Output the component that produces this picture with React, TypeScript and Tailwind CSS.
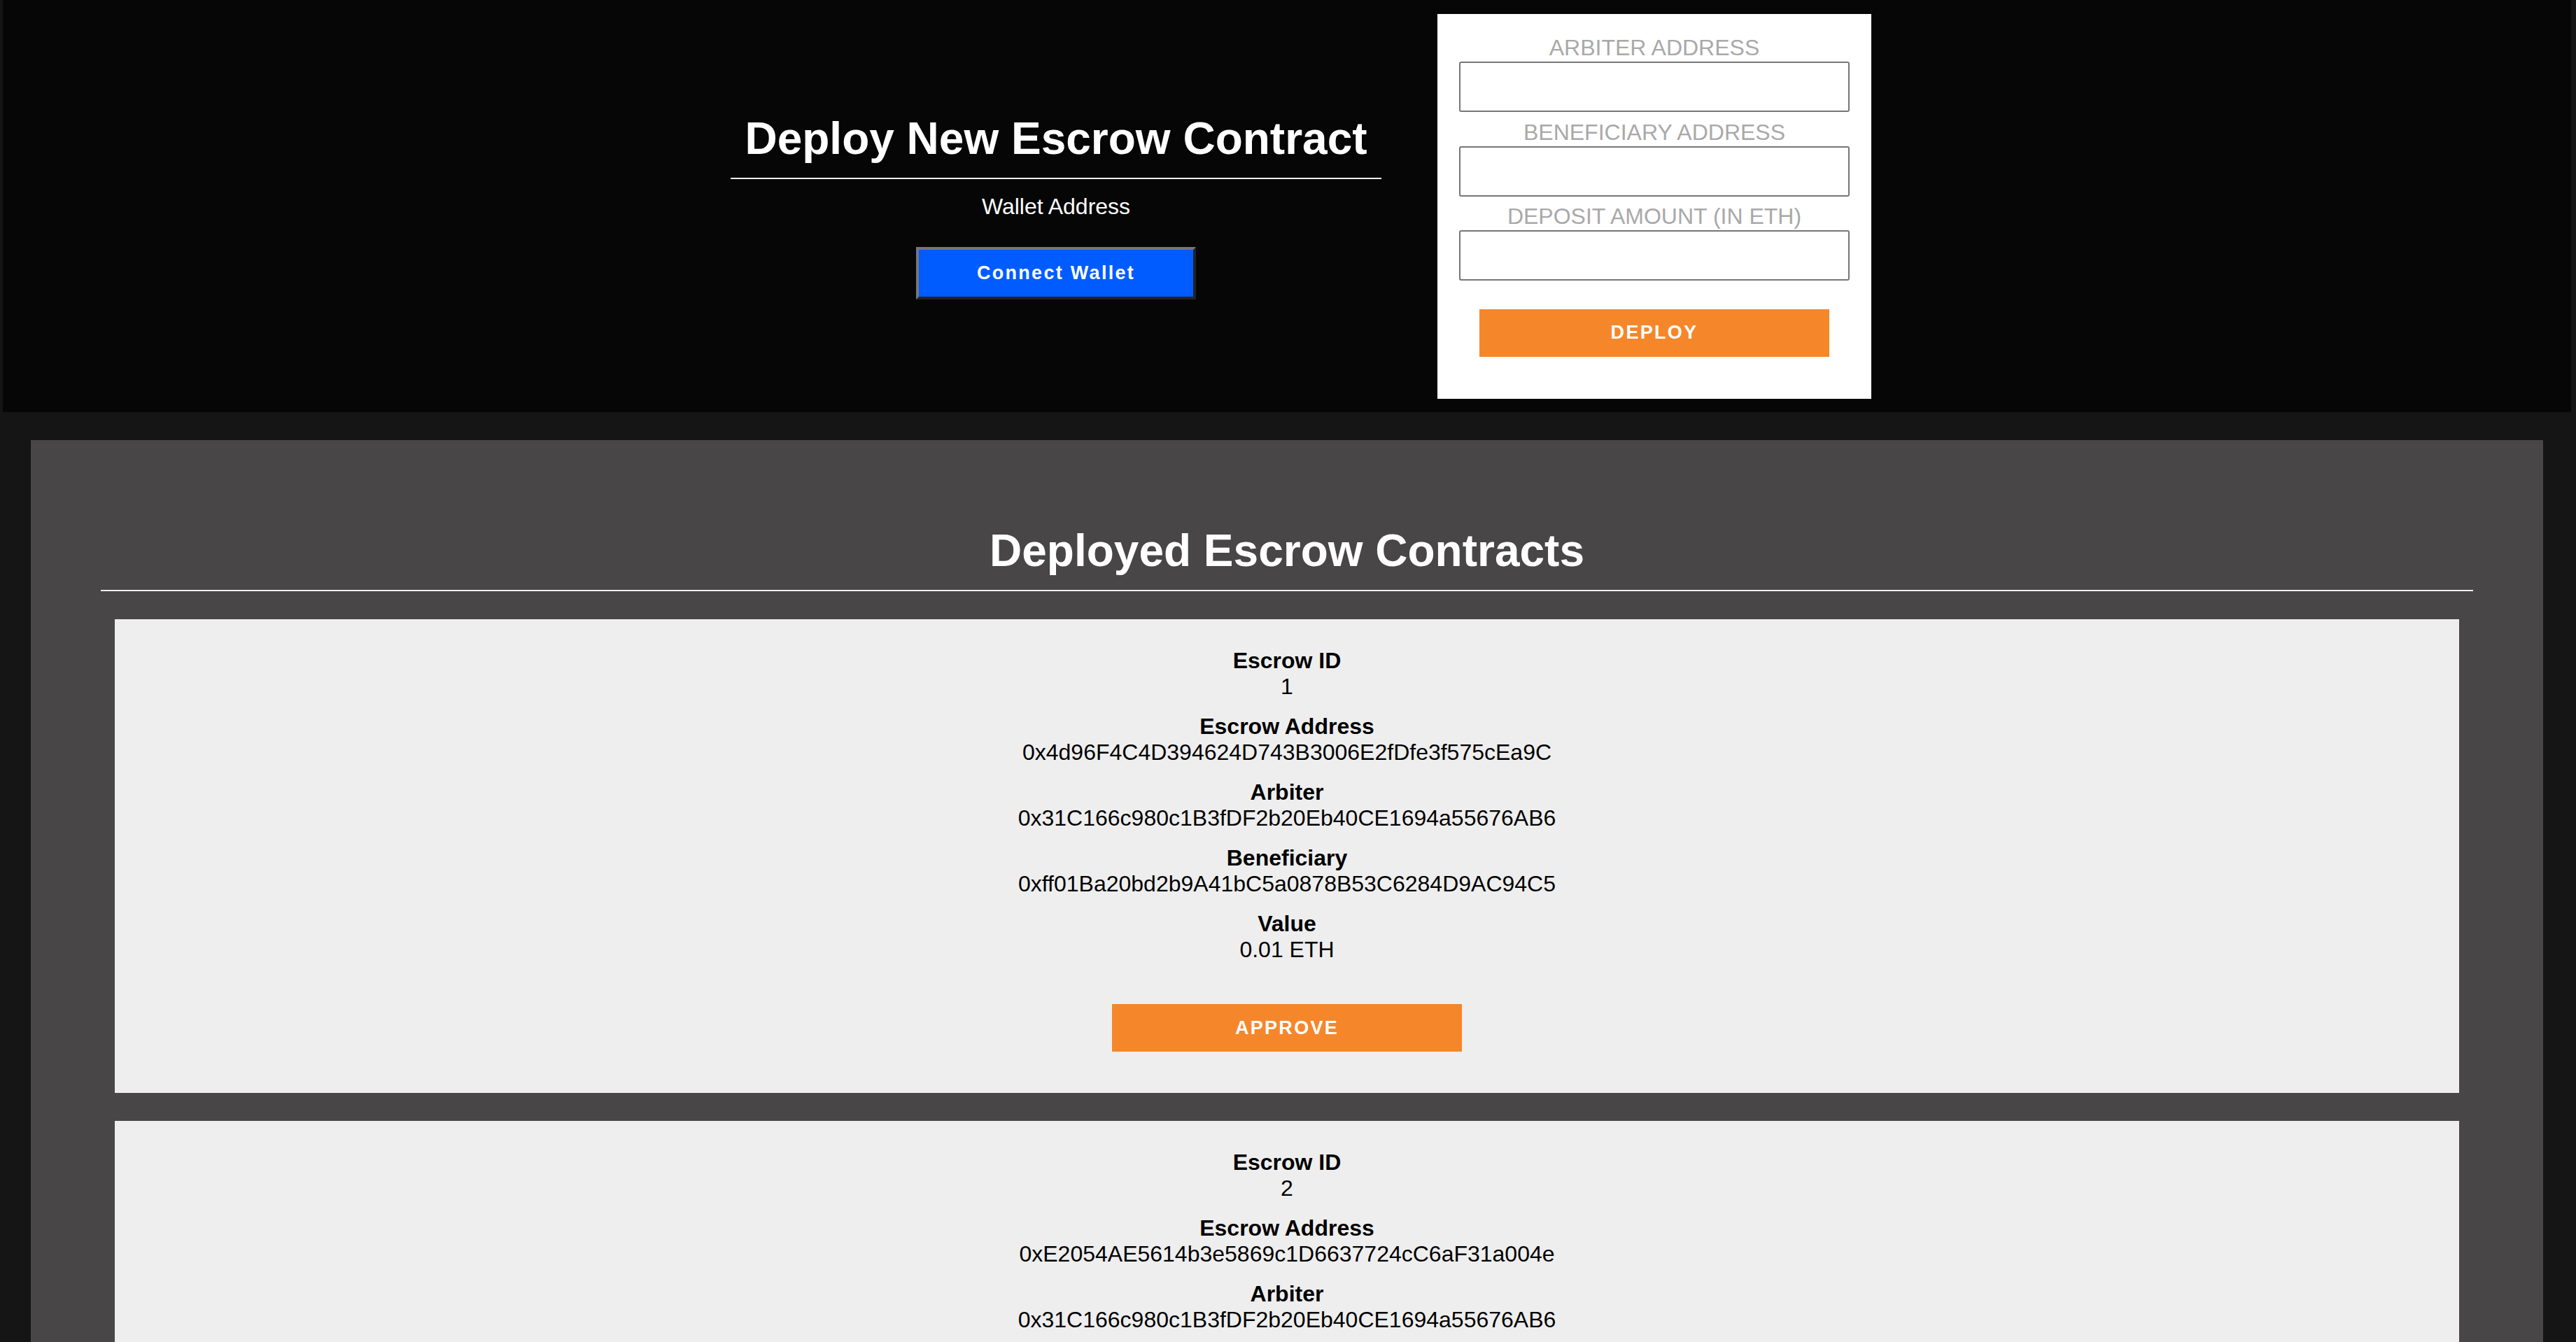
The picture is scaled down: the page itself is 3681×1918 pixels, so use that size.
import React from "react";

interface Escrow {
    id: number,
    address: string,
    arbiter: string,
    beneficiary: string,
    value: string
}

const escrows: Escrow[] = [
    {
        id: 1,
        address: "0x4d96F4C4D394624D743B3006E2fDfe3f575cEa9C",
        arbiter: "0x31C166c980c1B3fDF2b20Eb40CE1694a55676AB6",
        beneficiary: "0xff01Ba20bd2b9A41bC5a0878B53C6284D9AC94C5",
        value: "0.01 ETH"
    },
    {
        id: 2,
        address: "0xE2054AE5614b3e5869c1D6637724cC6aF31a004e",
        arbiter: "0x31C166c980c1B3fDF2b20Eb40CE1694a55676AB6",
        beneficiary: "0xff01Ba20bd2b9A41bC5a0878B53C6284D9AC94C5",
        value: "0.01 ETH"
    }
]

const Field = ({ label }: { label: string }) => {
    return (
        <div className="flex flex-col">
            <label className="text-center text-[32px] leading-[37px] text-[#a9a9a9] uppercase">{label}</label>
            <input className="mt-px h-[72px] w-full rounded-[3px] border-2 border-[#767676] bg-white px-2 text-[28px] outline-none" />
        </div>
    )
}

const Detail = ({ label, value }: { label: string, value: string | number }) => {
    return (
        <div className="mb-[20px] last:mb-0 flex flex-col items-center">
            <span className="font-bold text-[32px] leading-[37px] text-black">{label}</span>
            <span className="text-[32px] leading-[37px] text-black">{value}</span>
        </div>
    )
}

const EscrowCard = ({ escrow }: { escrow: Escrow }) => {
    return (
        <div className="mt-[40px] bg-[#eeeeee] pt-[41px] pb-[59px] flex flex-col items-center">
            <div className="flex flex-col items-center">
                <Detail label="Escrow ID" value={escrow.id} />
                <Detail label="Escrow Address" value={escrow.address} />
                <Detail label="Arbiter" value={escrow.arbiter} />
                <Detail label="Beneficiary" value={escrow.beneficiary} />
                <Detail label="Value" value={escrow.value} />
            </div>
            <button className="mt-[59px] h-[68px] w-[500px] bg-[#f5872a] text-white font-bold text-[27px] tracking-[2.3px]">
                APPROVE
            </button>
        </div>
    )
}

export default function App() {
    return (
        <div className="min-h-screen bg-[#151515] pb-[60px] font-['Liberation_Sans',Arial,sans-serif]">
            <header className="ml-[4px] mr-[7px] h-[589px] bg-[#060606] flex items-center justify-center">
                <div className="ml-[40px] mr-[80px] flex flex-col items-center">
                    <h1 className="w-[930px] text-center text-white font-bold text-[64px] leading-[74px] pb-[19px] border-b-2 border-[#eeeeee]">
                        Deploy New Escrow Contract
                    </h1>
                    <div className="mt-[21px] text-white text-[32px] leading-[37px]">Wallet Address</div>
                    <button className="mt-[39px] h-[75px] w-[400px] border-4 border-t-[#767676] border-l-[#767676] border-b-[#232323] border-r-[#232323] bg-[#005cff] text-white font-bold text-[27px] tracking-[2.3px]">
                        Connect Wallet
                    </button>
                </div>
                <div className="w-[620px] bg-white pt-[30px] px-[31px] pb-[60px] flex flex-col">
                    <Field label="Arbiter Address" />
                    <div className="mt-[11px]">
                        <Field label="Beneficiary Address" />
                    </div>
                    <div className="mt-[10px]">
                        <Field label="Deposit Amount (in ETH)" />
                    </div>
                    <button className="mt-[41px] mx-auto h-[68px] w-[500px] bg-[#f5872a] text-white font-bold text-[27px] tracking-[2.3px]">
                        DEPLOY
                    </button>
                </div>
            </header>
            <section className="mt-[40px] ml-[44px] mr-[47px] bg-[#484647] pt-[121px] px-[100px] pb-[40px]">
                <h2 className="text-center text-white font-bold text-[64px] leading-[74px] pb-[19px] border-b-2 border-[#eeeeee]">
                    Deployed Escrow Contracts
                </h2>
                <div className="px-[20px]">
                    {escrows.map((escrow) => (
                        <EscrowCard escrow={escrow} key={escrow.id} />
                    ))}
                </div>
            </section>
        </div>
    )
}
